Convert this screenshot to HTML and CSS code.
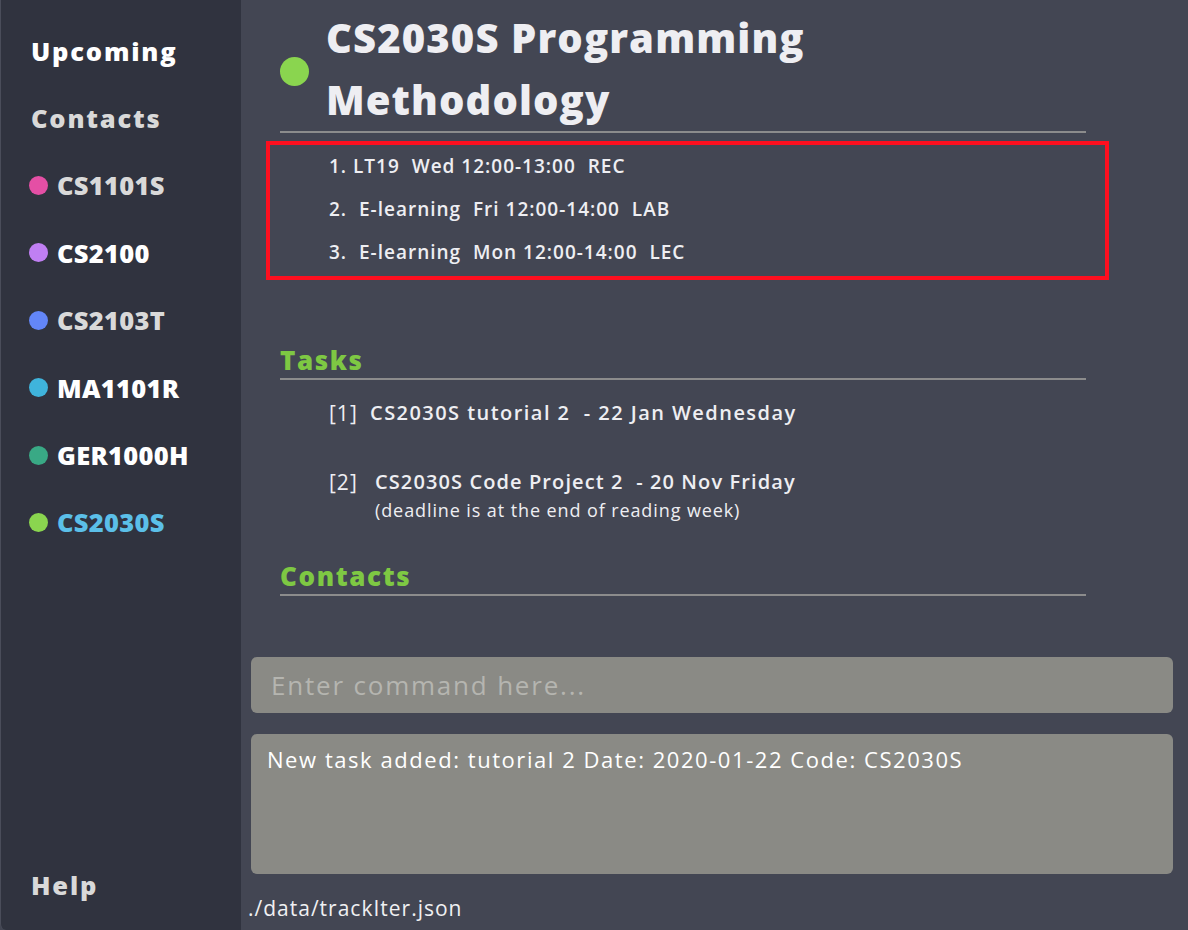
FILE: index.html
```html
<!DOCTYPE html>
<html>
<head>
<meta charset="utf-8">
<link rel="stylesheet" href="styles.css">
</head>
<body>
<div class="app">
  <nav class="sidebar">
    <div class="nav-item word white">Upcoming</div>
    <div class="nav-item word grey">Contacts</div>
    <div class="nav-item grey"><span class="dot pink"></span>CS1101S</div>
    <div class="nav-item white"><span class="dot purple"></span>CS2100</div>
    <div class="nav-item grey"><span class="dot blue"></span>CS2103T</div>
    <div class="nav-item white"><span class="dot cyan"></span>MA1101R</div>
    <div class="nav-item white"><span class="dot green"></span>GER1000H</div>
    <div class="nav-item active"><span class="dot lime"></span>CS2030S</div>
    <div class="spacer"></div>
    <div class="nav-item word grey help">Help</div>
  </nav>
  <main class="main">
    <section class="content">
      <header class="mod-header">
        <span class="mod-dot"></span>
        <h1 class="mod-title">CS2030S Programming<br>Methodology</h1>
      </header>
      <ol class="lessons">
        <li><span class="num">1.</span>&nbsp;LT19&nbsp; Wed 12:00-13:00&nbsp; REC</li>
        <li><span class="num">2.</span>&nbsp; E-learning&nbsp; Fri 12:00-14:00&nbsp; LAB</li>
        <li><span class="num">3.</span>&nbsp; E-learning&nbsp; Mon 12:00-14:00&nbsp; LEC</li>
      </ol>
      <h2 class="section-title tasks-title">Tasks</h2>
      <div class="task">
        <div class="task-line"><span class="idx">[1]</span><span class="task-name t1">CS2030S tutorial 2&nbsp; - 22 Jan Wednesday</span></div>
      </div>
      <div class="task task2">
        <div class="task-line"><span class="idx">[2]</span><span class="task-name">CS2030S Code Project 2&nbsp; - 20 Nov Friday</span></div>
        <div class="task-desc">(deadline is at the end of reading week)</div>
      </div>
      <h2 class="section-title contacts-title">Contacts</h2>
    </section>
    <section class="bottom">
      <div class="command">Enter command here...</div>
      <div class="result">New task added: tutorial 2 Date: 2020-01-22 Code: CS2030S</div>
      <div class="status">./data/trackIter.json</div>
    </section>
  </main>
</div>
</body>
</html>
```
FILE: styles.css
```css
html, body {
  margin: 0;
  padding: 0;
  background: #434653;
  font-family: "Open Sans", "Noto Sans", sans-serif;
}
.app {
  display: flex;
  width: 1188px;
  height: 930px;
  overflow: hidden;
}
.sidebar {
  width: 241px;
  flex: none;
  background: #30333f;
  border-left: 1px solid #4a4d5a;
  border-bottom-left-radius: 6px;
  display: flex;
  flex-direction: column;
  padding: 17px 0 17px 0;
  box-sizing: border-box;
}
.nav-item {
  height: 67.4px;
  display: flex;
  align-items: center;
  padding-left: 28px;
  font-size: 25.5px;
  font-weight: 800;
  letter-spacing: 0.3px;
}
.nav-item.word { letter-spacing: 1.8px; padding-left: 30px; }
.white { color: #ffffff; }
.grey { color: #d9d9d9; }
.active { color: #5bbfe8; }
.dot {
  width: 19px;
  height: 19px;
  border-radius: 50%;
  margin-right: 9px;
  flex: none;
}
.pink { background: #e44fa5; }
.purple { background: #c07ff3; }
.blue { background: #6386f8; }
.cyan { background: #3fb4dc; }
.green { background: #39a985; }
.lime { background: #8ad54f; }
.spacer { flex: 1; }
.help { height: 56px; }

.main {
  flex: 1;
  display: flex;
  flex-direction: column;
  color: #eeeef2;
}
.content {
  flex: 1;
  padding-left: 39px;
}
.mod-header {
  display: flex;
  align-items: center;
  width: 806px;
  border-bottom: 2px solid #8c8c8c;
  padding-top: 7px;
  box-sizing: border-box;
  height: 133px;
}
.mod-dot {
  width: 29px;
  height: 29px;
  border-radius: 50%;
  background: #8ad54f;
  flex: none;
  margin-right: 17px;
  margin-top: 4px;
}
.mod-title {
  margin: 0;
  font-size: 40px;
  line-height: 62px;
  font-weight: 800;
  color: #eeeef2;
  letter-spacing: 1.1px;
}
.lessons {
  list-style: none;
  margin: 8px 0 0 -14px;
  padding: 0 0 2px 59px;
  width: 843px;
  box-sizing: border-box;
  border: 4px solid #fd0f1f;
}
.lessons li {
  height: 43px;
  line-height: 43px;
  font-size: 19px;
  font-weight: 600;
  letter-spacing: 1px;
  white-space: pre;
}
.section-title {
  margin: 0;
  width: 806px;
  font-size: 26px;
  font-weight: 800;
  color: #7ec843;
  line-height: 36px;
  letter-spacing: 1.6px;
  border-bottom: 2px solid #8c8c8c;
}
.tasks-title { margin-top: 62px; }
.contacts-title { margin-top: 35px; }
.task { margin-top: 18px; padding-left: 49px; }
.task2 { margin-top: 39px; }
.task-line {
  display: flex;
  line-height: 30px;
  font-size: 20px;
  font-weight: 600;
  letter-spacing: 1.1px;
}
.t1 { letter-spacing: 1.45px; }
.idx {
  font-weight: 400;
  font-size: 21px;
  width: 41px;
  letter-spacing: 1px;
}
.task2 .idx { width: 46px; }
.task-desc {
  padding-left: 46px;
  line-height: 26px;
  font-size: 18px;
  font-weight: 400;
  letter-spacing: 0.9px;
}
.bottom {
  padding: 0 15px 8px 10px;
  display: flex;
  flex-direction: column;
}
.command {
  height: 56px;
  border-radius: 6px;
  background: #8a8a85;
  color: #b5b5b0;
  font-size: 26px;
  line-height: 56px;
  padding-left: 20px;
  letter-spacing: 1.8px;
}
.result {
  margin-top: 21px;
  height: 140px;
  border-radius: 6px;
  background: #8a8a85;
  color: #ffffff;
  font-size: 22px;
  padding: 10px 16px;
  box-sizing: border-box;
  line-height: 30px;
  letter-spacing: 1.55px;
}
.status {
  margin-top: 20px;
  margin-left: -3px;
  height: 28px;
  line-height: 28px;
  font-size: 21px;
  color: #f0f0f2;
  letter-spacing: 1px;
}
```
